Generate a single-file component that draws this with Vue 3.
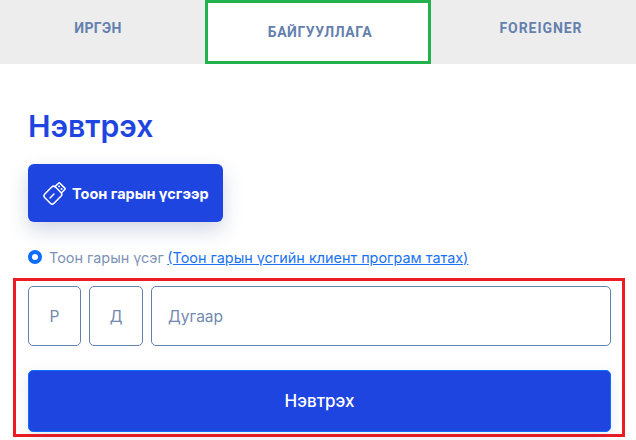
<script setup>
const tabs = [
  { label: 'ИРГЭН', cls: 'first' },
  { label: 'БАЙГУУЛЛАГА', cls: 'active' },
  { label: 'FOREIGNER', cls: 'last' }
]
</script>

<template>
  <div class="page">
    <nav class="tabs">
      <a v-for="t in tabs" :key="t.label" class="tab" :class="t.cls">{{ t.label }}</a>
    </nav>
    <main class="body">
      <h1 class="title">Нэвтрэх</h1>
      <button class="token">
        <svg class="usb" width="26" height="28" viewBox="0 0 26 28" fill="none" stroke="#fff" stroke-width="1.5" stroke-linejoin="round" stroke-linecap="round">
          <g transform="rotate(45 13 14)">
            <rect x="6.5" y="9.5" width="13" height="15" rx="2.6" />
            <path d="M8.5 9.5V4.6a1 1 0 0 1 1-1h7a1 1 0 0 1 1 1v4.9" />
            <path d="M11.2 6.5h.01M14.8 6.5h.01" stroke-width="1.9" />
            <path d="M13 15.5v5.5" />
          </g>
        </svg>
        <span>Тоон гарын үсгээр</span>
      </button>
      <div class="radio-row">
        <span class="radio"></span>
        <span class="radio-label">Тоон гарын үсэг</span>
        <a class="link">(Тоон гарын үсгийн клиент програм татах)</a>
      </div>
      <section class="highlight">
        <div class="fields">
          <div class="box short">Р</div>
          <div class="box short">Д</div>
          <div class="box number">Дугаар</div>
        </div>
        <button class="submit">Нэвтрэх</button>
      </section>
    </main>
  </div>
</template>

<style>
html, body { margin: 0; background: #fff; }
</style>

<style scoped>
.page {
  width: 636px;
  height: 440px;
  overflow: hidden;
  font-family: Inter, "Noto Sans", sans-serif;
  background: #fff;
}
.tabs {
  display: flex;
  height: 64px;
  background: #ededed;
}
.tab {
  flex: 0 0 205px;
  display: flex;
  align-items: center;
  justify-content: center;
  padding-bottom: 8px;
  box-sizing: border-box;
  font-family: Roboto, sans-serif;
  font-size: 14px;
  font-weight: 700;
  letter-spacing: 0.55px;
  color: #6480ae;
}
.tab.first {
  padding-right: 9px;
  letter-spacing: 0.4px;
}
.tab.last {
  padding-left: 15px;
  letter-spacing: 0.95px;
}
.tab.active {
  flex: 0 0 226px;
  background: #fff;
  border: 3px solid #22b14c;
  padding: 0 0 0 4px;
}
.body {
  padding: 0 11px 0 13px;
}
.title {
  margin: 44px 0 0 15px;
  font-size: 30.2px;
  line-height: 36px;
  font-weight: 600;
  color: #1f45e1;
}
.token {
  display: flex;
  align-items: center;
  gap: 4px;
  margin: 20px 0 0 15px;
  width: 195px;
  height: 58px;
  padding: 0 0 0 14px;
  box-sizing: border-box;
  border: none;
  border-radius: 6px;
  background: #1f45e1;
  color: #fff;
  font-family: Inter, sans-serif;
  font-size: 14.5px;
  font-weight: 700;
  white-space: nowrap;
  box-shadow: 0 8px 20px rgba(30, 50, 120, 0.2);
}
.radio-row {
  display: flex;
  align-items: center;
  margin: 25px 0 0 15px;
  height: 20px;
  font-size: 14.4px;
  white-space: nowrap;
}
.radio {
  width: 14px;
  height: 14px;
  flex: none;
  box-sizing: border-box;
  border-radius: 50%;
  border: 4.5px solid #0d6efd;
  background: #fff;
  margin-right: 7px;
}
.radio-label {
  color: #7d92b6;
  margin-right: 3.5px;
}
.link {
  color: #1a73f0;
  text-decoration: underline;
}
.highlight {
  width: 612px;
  height: 159px;
  margin-top: 11px;
  padding: 5px 11px 0 12px;
  box-sizing: border-box;
  border: 3px solid #ed1c24;
}
.fields {
  display: flex;
  gap: 8px;
}
.box {
  height: 60px;
  box-sizing: border-box;
  display: flex;
  align-items: center;
  border: 1px solid #6480ae;
  border-radius: 5px;
  color: #7389b0;
  font-size: 15.5px;
  background: #fff;
}
.short {
  flex: 0 0 53px;
  justify-content: center;
}
.short + .short {
  flex-basis: 54px;
}
.number {
  flex: 1;
  padding-left: 16px;
}
.submit {
  display: block;
  width: 100%;
  height: 62px;
  margin-top: 24px;
  box-sizing: border-box;
  border: 1px solid #0d6efd;
  border-radius: 5px;
  background: #1f45e1;
  color: #fff;
  font-family: Inter, sans-serif;
  font-size: 17px;
  font-weight: 500;
  box-shadow: 0 6px 16px rgba(30, 50, 120, 0.1);
}
</style>
